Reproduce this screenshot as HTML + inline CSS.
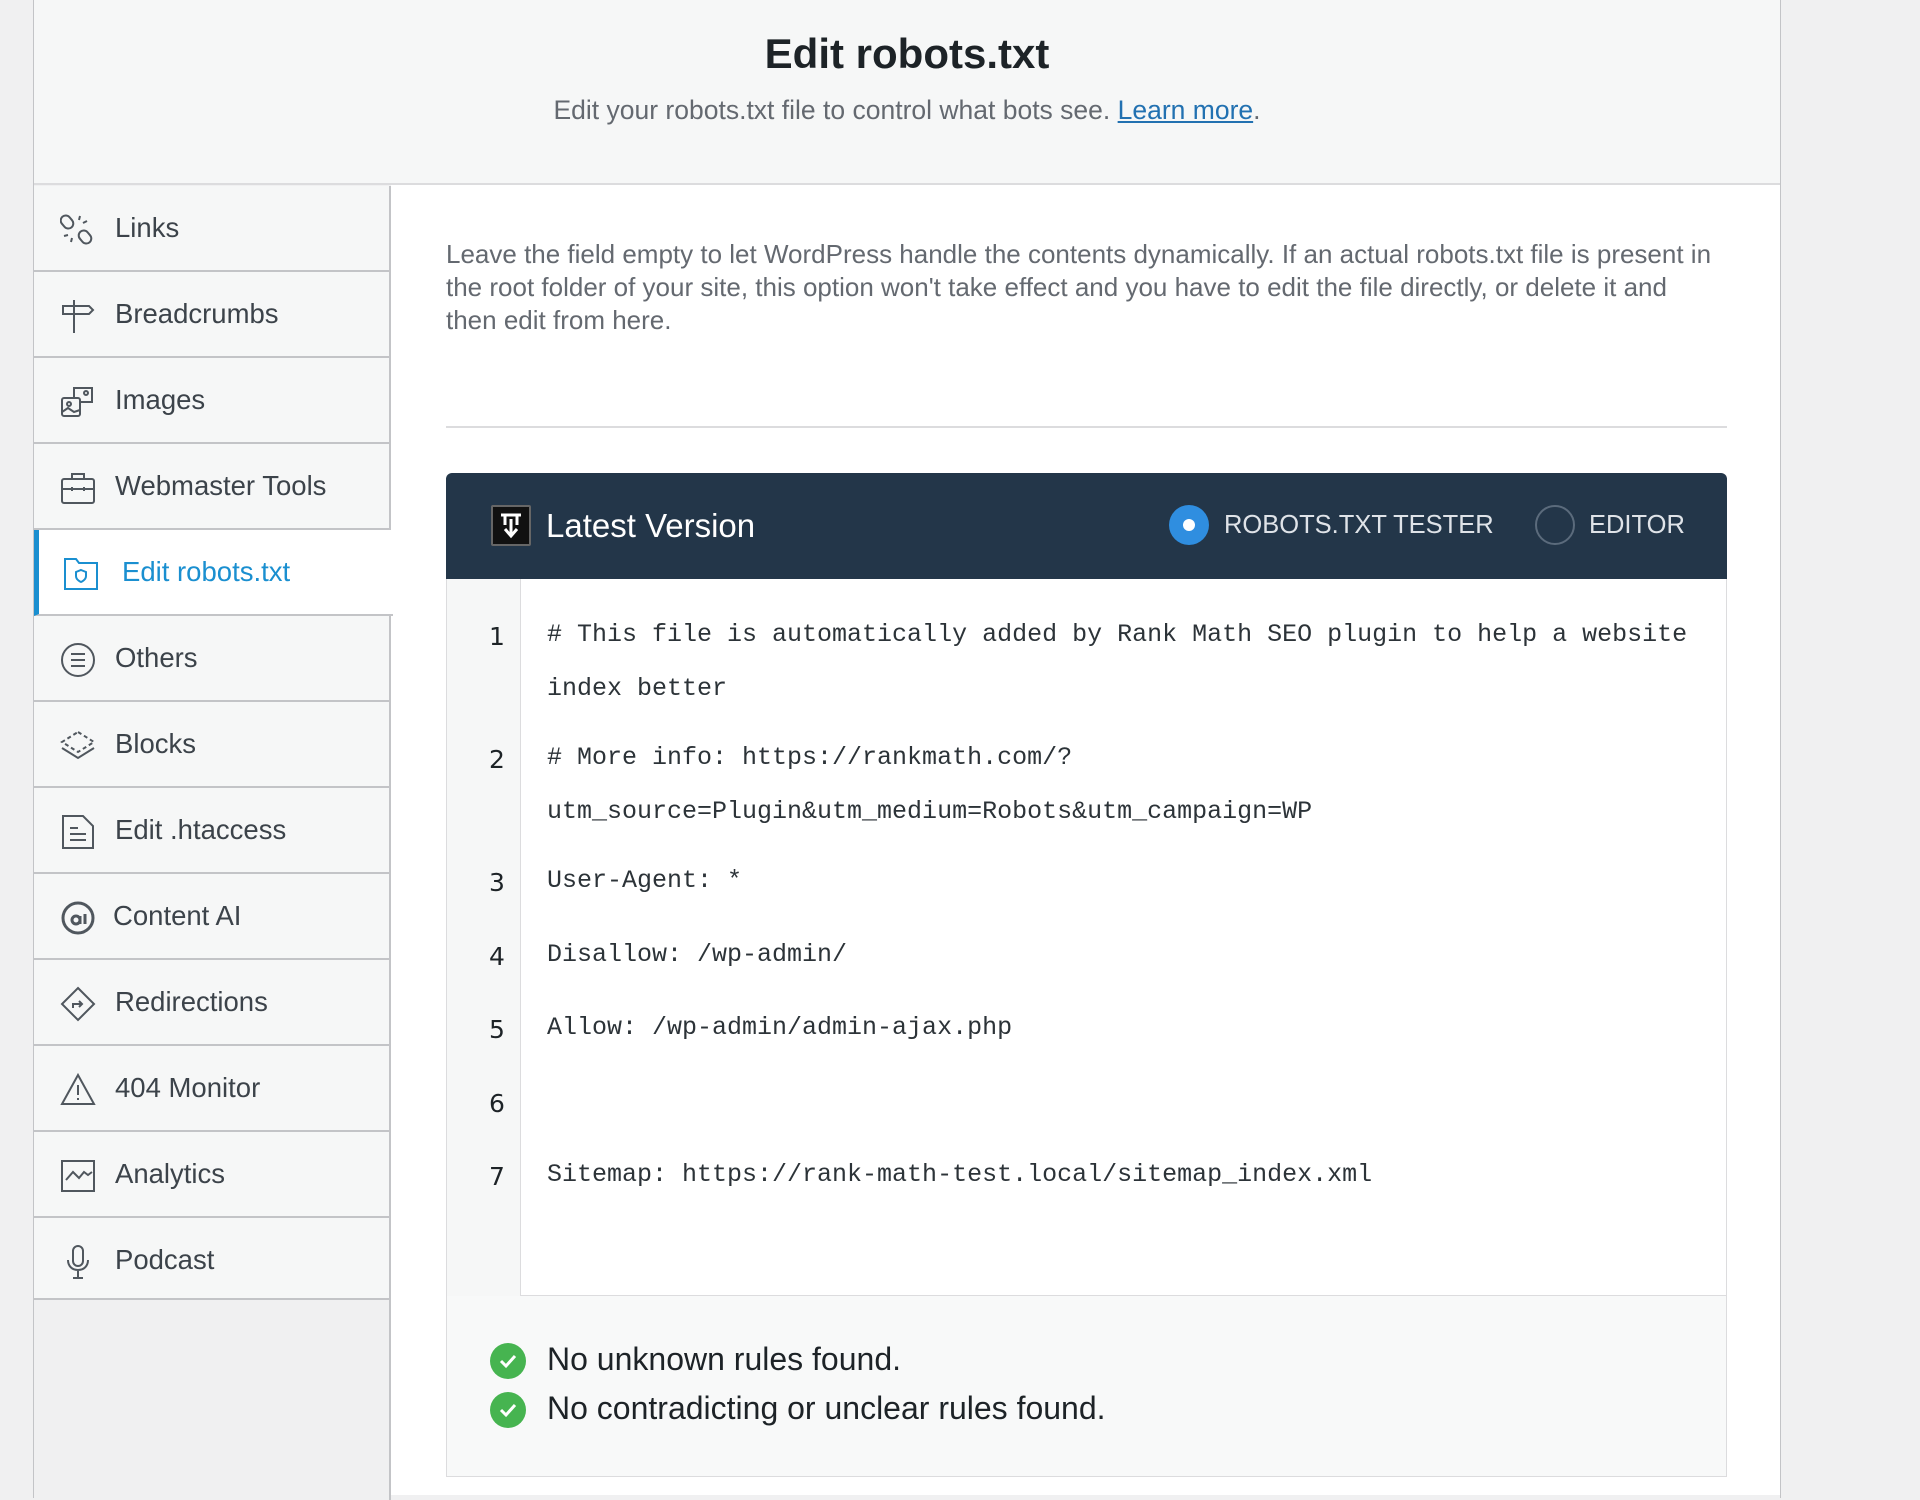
<!DOCTYPE html>
<html><head><meta charset="utf-8"><style>
*{margin:0;padding:0;box-sizing:border-box}
body{width:1920px;height:1489px;background:#f0f0f1;font-family:"Liberation Sans",sans-serif;position:relative;overflow:hidden;color:#3c434a}
.abs{position:absolute}
#wrap{left:33px;top:-2px;width:1748px;height:1500px;background:#f0f0f1;border-left:1px solid #c3c4c7;border-right:1px solid #c3c4c7}
#main{left:391px;top:185px;width:1389px;height:1310px;background:#fff}
#head{left:34px;top:0;width:1746px;height:185px;background:#f6f7f7;border-bottom:2px solid #dcdcde}
h1{position:absolute;left:0;width:1746px;top:30px;text-align:center;font-size:42px;font-weight:bold;color:#1d2327}
.sub{position:absolute;left:0;width:1746px;top:95px;text-align:center;font-size:26.5px;color:#646970}
.sub a{color:#2271b1;text-decoration:underline}
#side{left:34px;top:186px;width:357px;height:1114px;background:#f6f7f7;border-right:2px solid #c3c4c7;border-bottom:2px solid #c3c4c7}
.it{position:absolute;left:0;width:357px;height:86px;border-bottom:2px solid #c3c4c7;font-size:27.5px;color:#3c434a}
.it span{position:absolute;left:81px;top:26px}
.it svg{position:absolute;left:26px;top:26px}
.it.act{background:#fff;border-left:5px solid #1a8fd0;color:#1a8fd0;width:359px}
.it.act span{left:83px}
.it.act svg{left:24px}
#side2{left:389px;top:1300px;width:2px;height:200px;background:#c3c4c7}
.desc{left:446px;top:238px;width:1272px;font-size:26px;line-height:33px;color:#646970}
#hr{left:446px;top:426px;width:1281px;height:2px;background:#dcdcde}
#bar{left:446px;top:473px;width:1281px;height:106px;background:#233649;border-radius:6px 6px 0 0}
#code{left:446px;top:579px;width:1281px;height:717px;background:#fff;border:1px solid #dcdcde;border-top:none}
#gut{left:446px;top:579px;width:75px;height:717px;background:#f6f7f7;border-right:1px solid #dcdcde;border-left:1px solid #dcdcde}
.ln{position:absolute;left:446px;width:102px;text-align:center;font-family:"DejaVu Sans",sans-serif;font-size:25px;color:#1d2327}
.cd{position:absolute;left:547px;font-family:"Liberation Mono",monospace;font-size:25px;color:#2c3338;white-space:pre}
#foot{left:446px;top:1296px;width:1281px;height:181px;background:#f8f9f9;border:1px solid #dcdcde;border-top:none}
.ok{position:absolute;left:547px;font-size:32px;color:#1d2327}
.chk{position:absolute;left:490px;width:36px;height:36px;border-radius:50%;background:#46b450}
</style></head><body>
<div id="wrap" class="abs"></div>
<div id="main" class="abs"></div>
<div id="head" class="abs"><h1>Edit robots.txt</h1><div class="sub">Edit your robots.txt file to control what bots see. <a>Learn more</a>.</div></div>
<div id="side" class="abs">
<div class="it" style="top:0"><svg width="36" height="36" viewBox="0 0 36 36" fill="none" stroke="#50575e" stroke-width="2"><rect x="2" y="3" width="10" height="14" rx="5" transform="rotate(-40 7 10)"/><rect x="20" y="18" width="10" height="14" rx="5" transform="rotate(-40 25 25)"/><path d="M20 4l-1 4M27 9l-4 2M4 24l4-1M11 30l1-4"/></svg><span>Links</span></div>
<div class="it" style="top:86px"><svg width="36" height="36" viewBox="0 0 36 36" fill="none" stroke="#50575e" stroke-width="2"><path d="M14 2v33M3 8h26l4 4-4 4H3z"/></svg><span>Breadcrumbs</span></div>
<div class="it" style="top:172px"><svg width="36" height="36" viewBox="0 0 36 36" fill="none" stroke="#50575e" stroke-width="2"><rect x="2" y="14" width="18" height="18" rx="2"/><path d="M14 14V4h18v14H20"/><circle cx="9" cy="20" r="2"/><circle cx="26" cy="9" r="2"/><path d="M2 28l6-4 6 4 6-2"/></svg><span>Images</span></div>
<div class="it" style="top:258px"><svg width="36" height="36" viewBox="0 0 36 36" fill="none" stroke="#50575e" stroke-width="2"><rect x="2" y="9" width="32" height="24" rx="2"/><path d="M12 9V4h12v5M2 19h32M12 17v4M24 17v4"/></svg><span>Webmaster Tools</span></div>
<div class="it act" style="top:344px"><svg width="36" height="36" viewBox="0 0 36 36" fill="none" stroke="#1a8fd0" stroke-width="2"><path d="M2 3h11l3 4h18v26H2z"/><path d="M18 14l5 2v4c0 4-5 6-5 6s-5-2-5-6v-4z"/></svg><span>Edit robots.txt</span></div>
<div class="it" style="top:430px"><svg width="36" height="36" viewBox="0 0 36 36" fill="none" stroke="#50575e" stroke-width="2"><circle cx="18" cy="18" r="16"/><path d="M11 12h14M11 18h14M11 24h14"/></svg><span>Others</span></div>
<div class="it" style="top:516px"><svg width="36" height="36" viewBox="0 0 36 36" fill="none" stroke="#50575e" stroke-width="2"><path d="M18 4l16 10-16 10L2 14z" stroke-dasharray="4 3"/><path d="M2 20l16 10 16-10"/></svg><span>Blocks</span></div>
<div class="it" style="top:602px"><svg width="36" height="36" viewBox="0 0 36 36" fill="none" stroke="#50575e" stroke-width="2"><path d="M3 2h20l10 10v22H3z"/><path d="M10 14h8M10 20h16M10 26h16"/></svg><span>Edit .htaccess</span></div>
<div class="it" style="top:688px"><svg width="36" height="36" viewBox="0 0 36 36" fill="none" stroke="#50575e" stroke-width="3"><circle cx="18" cy="18" r="15"/><circle cx="16" cy="20" r="4"/><path d="M20 16v8M25 14v10"/></svg><span style="left:79px">Content AI</span></div>
<div class="it" style="top:774px"><svg width="36" height="36" viewBox="0 0 36 36" fill="none" stroke="#50575e" stroke-width="2"><path d="M18 2l16 16-16 16L2 18z"/><path d="M13 22v-4h9M19 15l3 3-3 3"/></svg><span>Redirections</span></div>
<div class="it" style="top:860px"><svg width="36" height="36" viewBox="0 0 36 36" fill="none" stroke="#50575e" stroke-width="2"><path d="M18 3l16 29H2z"/><path d="M18 13v10M18 26v2"/></svg><span>404 Monitor</span></div>
<div class="it" style="top:946px"><svg width="36" height="36" viewBox="0 0 36 36" fill="none" stroke="#50575e" stroke-width="2"><rect x="2" y="3" width="32" height="30"/><path d="M6 22l7-8 6 6 5-6 4 3 4-3"/></svg><span>Analytics</span></div>
<div class="it" style="top:1032px;border-bottom:none"><svg width="36" height="36" viewBox="0 0 36 36" fill="none" stroke="#50575e" stroke-width="2"><rect x="13" y="2" width="10" height="20" rx="5"/><path d="M8 16c0 6 4 10 10 10s10-4 10-10M18 26v8M13 34h10"/></svg><span>Podcast</span></div>
</div>
<div id="side2" class="abs"></div>
<div class="abs desc">Leave the field empty to let WordPress handle the contents dynamically. If an actual robots.txt file is present in the root folder of your site, this option won't take effect and you have to edit the file directly, or delete it and then edit from here.</div>
<div id="hr" class="abs"></div>
<div id="bar" class="abs">
<div class="abs" style="left:45px;top:32px;width:40px;height:41px;background:#111;border:2px solid #666;border-radius:2px"><svg width="36" height="37" viewBox="0 0 36 37" fill="none" stroke="#fff" stroke-width="3"><path d="M8 8h20M12 8v10M24 8v10M18 12v16M12 22l6 7 6-7"/></svg></div>
<div class="abs" style="left:100px;top:34px;font-size:33px;color:#fff">Latest Version</div>
<div class="abs" style="left:723px;top:32px;width:40px;height:40px;border-radius:50%;background:#2f8ee0"><div class="abs" style="left:14px;top:14px;width:12px;height:12px;border-radius:50%;background:#fff"></div></div>
<div class="abs" style="left:778px;top:38px;font-size:25.5px;color:#dfe3e8">ROBOTS.TXT TESTER</div>
<div class="abs" style="left:1089px;top:32px;width:40px;height:40px;border-radius:50%;border:2px solid #5b6b7c"></div>
<div class="abs" style="left:1143px;top:38px;font-size:25.5px;color:#dfe3e8">EDITOR</div>
</div>
<div id="code" class="abs"></div>
<div id="gut" class="abs"></div>
<div class="ln" style="top:622px">1</div><div class="cd" style="top:620px"># This file is automatically added by Rank Math SEO plugin to help a website</div>
<div class="cd" style="top:674px">index better</div>
<div class="ln" style="top:745px">2</div><div class="cd" style="top:743px"># More info: https://rankmath.com/?</div>
<div class="cd" style="top:797px">utm_source=Plugin&amp;utm_medium=Robots&amp;utm_campaign=WP</div>
<div class="ln" style="top:868px">3</div><div class="cd" style="top:866px">User-Agent: *</div>
<div class="ln" style="top:942px">4</div><div class="cd" style="top:940px">Disallow: /wp-admin/</div>
<div class="ln" style="top:1015px">5</div><div class="cd" style="top:1013px">Allow: /wp-admin/admin-ajax.php</div>
<div class="ln" style="top:1089px">6</div>
<div class="ln" style="top:1162px">7</div><div class="cd" style="top:1160px">Sitemap: https://rank-math-test.local/sitemap_index.xml</div>
<div id="foot" class="abs"></div>
<div class="chk" style="top:1343px"><svg width="36" height="36" viewBox="0 0 36 36" fill="none" stroke="#fff" stroke-width="3"><path d="M11 18l5 5 9-10"/></svg></div>
<div class="ok" style="top:1341px">No unknown rules found.</div>
<div class="chk" style="top:1392px"><svg width="36" height="36" viewBox="0 0 36 36" fill="none" stroke="#fff" stroke-width="3"><path d="M11 18l5 5 9-10"/></svg></div>
<div class="ok" style="top:1390px">No contradicting or unclear rules found.</div>
</body></html>
